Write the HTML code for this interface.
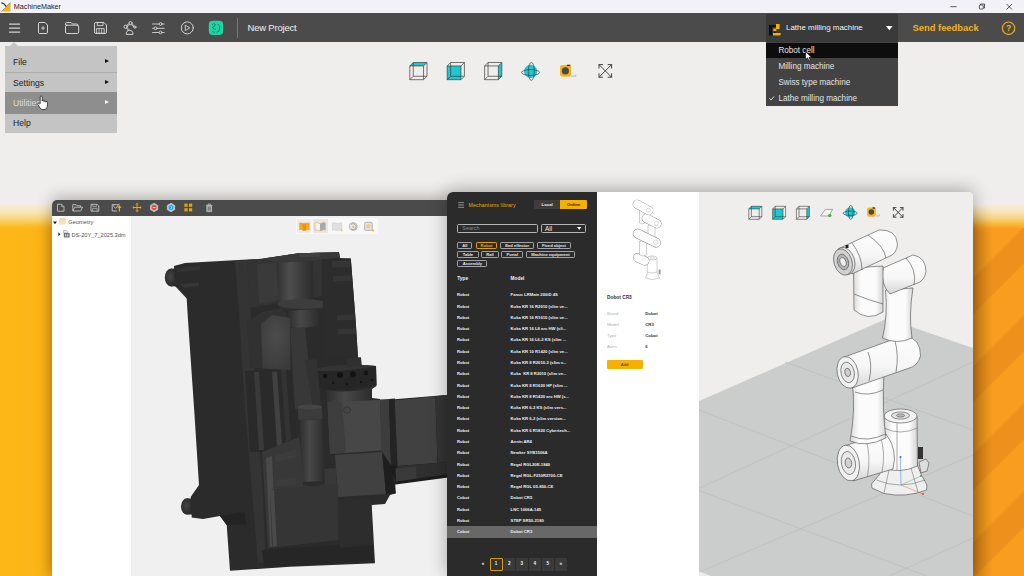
<!DOCTYPE html>
<html><head><meta charset="utf-8"><title>MachineMaker</title>
<style>
*{box-sizing:border-box;margin:0;padding:0}
html,body{width:1024px;height:576px;overflow:hidden;background:#efeeec;font-family:"Liberation Sans",sans-serif;}
.abs{position:absolute}
#titlebar{position:absolute;left:0;top:0;width:1024px;height:14px;background:#f3f1f8;}
#titlebar .t{position:absolute;left:13.8px;top:2px;font-size:7.2px;color:#222;line-height:10px}
#toolbar{position:absolute;left:0;top:14px;width:1024px;height:28.3px;background:#4b4b4b;}
#band{position:absolute;left:0;top:204px;width:1024px;height:372px;background:linear-gradient(90deg,#fdb716 0%,#fcb416 6%,#f89c1e 95%);}
#stripes{position:absolute;left:973px;top:228px;width:51px;height:348px;background:repeating-linear-gradient(135deg,#f89d1f 0,#f89d1f 34px,#ed911c 36.5px,#ed911c 60px,#f89d1f 62.2px)}
#lsh{position:absolute;left:40px;top:205px;width:12px;height:371px;background:linear-gradient(90deg,rgba(190,120,10,0),rgba(190,120,10,.22));-webkit-mask-image:linear-gradient(180deg,transparent 0,#000 30px);mask-image:linear-gradient(180deg,transparent 0,#000 30px)}
#rsh{position:absolute;left:973px;top:205px;width:19px;height:371px;background:linear-gradient(90deg,rgba(120,70,10,.4),rgba(120,70,10,.2) 40%,rgba(120,70,10,0));-webkit-mask-image:linear-gradient(180deg,transparent 0,#000 28px);mask-image:linear-gradient(180deg,transparent 0,#000 28px)}
#bandfade{position:absolute;left:0;top:204px;width:1024px;height:25px;background:linear-gradient(180deg,rgba(245,237,222,1) 0%,rgba(247,232,196,.96) 30%,rgba(249,222,150,.88) 55%,rgba(251,208,100,.68) 75%,rgba(252,196,60,.38) 90%,rgba(253,188,36,0) 100%);}
#menu{position:absolute;left:5px;top:45.5px;width:112px;height:87.5px;background:#c4c4c4;font-size:8.6px;color:#222}
#menu .it{position:absolute;left:0;width:112px;height:21px;line-height:21px;padding-left:8px}
#dd{position:absolute;left:766px;top:42px;width:131.5px;height:64px;background:#434343;font-size:8.15px;color:#e4e4e4}
#dd .it{position:absolute;left:0;width:132px;height:16px;line-height:16px;padding-left:12.4px;white-space:nowrap}
#lw{position:absolute;left:52px;top:199.5px;width:400px;height:377px;background:#f0f0f0;border-radius:5px 0 0 0;overflow:hidden;box-shadow:0 -2px 16px rgba(0,0,0,.3)}
#lw .tb{position:absolute;left:0;top:0;width:100%;height:16.6px;background:#4b4b4b}
#lw .tree{position:absolute;left:0;top:16.6px;width:79px;height:360px;background:#fff}
#rw{position:absolute;left:447px;top:191.5px;width:526px;height:385px;background:#efeeec;border-radius:6px 4px 0 0;overflow:hidden;box-shadow:0 -2px 18px rgba(0,0,0,.32)}
#rw .dark{position:absolute;left:0;top:0;width:150.7px;height:385px;background:#2b2b2b}
#rw .det{position:absolute;left:150px;top:0;width:102px;height:385px;background:#fff}

#titlebar svg{position:absolute}
.wc{position:absolute;top:0;color:#222;font-size:9px}
#toolbar svg{position:absolute}
#toolbar .np{position:absolute;left:247.5px;top:7px;font-size:9.5px;line-height:14px;color:#f0f0f0;letter-spacing:-.2px}
#toolbar .sep{position:absolute;left:237px;top:4px;width:1px;height:20px;background:#7a7a7a}
#sel{position:absolute;left:766px;top:0;width:131.5px;height:28.3px;background:#3a3a3a}
#sel .tx{position:absolute;left:20px;top:8px;font-size:7.95px;line-height:12px;color:#f2f2f2;white-space:nowrap}
#fb{position:absolute;left:912.5px;top:7px;font-size:9.4px;line-height:14px;font-weight:bold;color:#f2b31b;letter-spacing:0;white-space:nowrap}
#menu .it{white-space:nowrap}
#menu .arr{position:absolute;left:100px;width:0;height:0;border-left:4.8px solid #111;border-top:2.9px solid transparent;border-bottom:2.9px solid transparent}

#lw svg{position:absolute}
#lw .tr{position:absolute;font-size:5.7px;line-height:8px;color:#505050;white-space:nowrap}
#vicons{position:absolute;left:244px;top:18.5px;width:81.5px;height:15.5px;background:#f8f8f8}

#rw svg{position:absolute}
#rw .dark{color:#f0f0f0;font-size:4.2px;font-weight:bold}
#rw .dark div{position:absolute;white-space:nowrap}
.tag{height:7.2px;border:.7px solid #a4a4a4;border-radius:1.2px;font-size:4.1px;line-height:5.6px;text-align:center;color:#e8e8e8}
.row{left:0;width:150px;height:11.28px;line-height:11.28px}
.row span{position:absolute;left:10px}
.row span+span{left:63.6px}
.pg{top:366.7px;height:12.6px;background:#3a3a3a;line-height:12.6px;text-align:center;font-size:4.6px;border-radius:1px}
#rw .det{font-size:4.3px;color:#222}
#rw .det div{position:absolute;white-space:nowrap;line-height:6px}
#rw .det .k{left:10px;color:#b0b0b0}
#rw .det .v{left:48.2px;font-weight:bold;color:#333}
</style></head><body>
<div id="band"></div><div id="stripes"></div><div id="bandfade"></div><div id="lsh"></div><div id="rsh"></div>
<div id="titlebar">
<svg style="left:.9px;top:2.1px" width="10" height="10" viewBox="0 0 10 10"><rect x="0" y="0" width="9.6" height="9.6" fill="#fbfbfb"/><polygon points=".5,9.500 9.500,.600 9.500,9.500" fill="#f2b40f"/><path d="M.3,.6 L3.200,2 L5.300,4.600" stroke="#3a3a3a" stroke-width="1.2" fill="none"/><path d="M5.300,4.600 L8.600,1" stroke="#777" stroke-width=".7" fill="none"/><path d="M.4,9.600 L9.600,.500" stroke="#a07a10" stroke-width=".5"/><rect x="0" y="0" width="9.6" height="9.6" fill="none" stroke="#c9c9c9" stroke-width=".4"/></svg>
<div class="t">MachineMaker</div>
<svg style="left:948px;top:2px" width="70" height="10" viewBox="0 0 70 10"><g stroke="#333" stroke-width=".8" fill="none"><line x1="2.4" y1="4.7" x2="8.6" y2="4.7"/><rect x="31.3" y="3" width="4" height="4" rx="1"/><path d="M32.5,3 V2 H36.5 V6 H35.4"/><path d="M58.5,2 l5.5,5.5 M64,2 l-5.5,5.5"/></g></svg>
</div>
<div class="abs" style="left:0;top:13.3px;width:1024px;height:1px;background:#4b4b4b"></div><div class="abs" style="left:766px;top:13.5px;width:131.5px;height:1px;background:#3a3a3a"></div>
<div id="toolbar">
<svg style="left:0;top:0" width="240" height="28" viewBox="0 14 240 28"><g stroke="#d4d4d4" stroke-width="1" fill="none" stroke-linecap="round" stroke-linejoin="round">
<path d="M9.600,24.100 H19.600 M9.600,28.100 H19.600 M9.600,32.100 H19.600" stroke-width="1.400"/>
<path d="M39.5,22.5 H45 L47.5,25 V32.2 Q47.5,33.5 46.2,33.5 H39.7 Q38.5,33.5 38.5,32.2 V23.7 Q38.5,22.5 39.5,22.5 Z"/><path d="M43,26.6 V29.6 M41.5,28.1 H44.5" stroke-width=".9"/>
<path d="M65.5,25 V23.8 Q65.5,22.5 66.8,22.5 H71 L72.5,24 H76.6 Q78,24 78,25.3 V26"/><rect x="65.5" y="25.2" width="13.2" height="8.3" rx="1.4"/>
<path d="M94.5,23.8 Q94.5,22.5 95.8,22.5 H104 L106.5,25 V32.2 Q106.5,33.5 105.2,33.5 H95.8 Q94.5,33.5 94.5,32.2 Z"/><path d="M97.3,22.7 V25.6 H103 V22.7" stroke-width=".9"/><rect x="96.8" y="28.6" width="7.4" height="4.6" stroke-width=".9"/><path d="M99,29 V33 M101.6,29 V33" stroke-width=".7"/>
<path d="M126.200,34 Q126.200,30.300 129.600,30.300 Q133,30.300 133,34 Z"/><path d="M128.800,30.200 L125.600,26.700 L130.500,23.100 L134.600,26.800" stroke-width="1.700"/><path d="M128.800,30.200 L125.600,26.700 L130.500,23.100 L134.600,26.800" stroke="#4b4b4b" stroke-width=".5"/><circle cx="125.600" cy="26.700" r="1.600" fill="#4b4b4b"/><circle cx="130.500" cy="23.100" r="1.600" fill="#4b4b4b"/><circle cx="134.900" cy="27.100" r="1.100" fill="#4b4b4b"/>
<path d="M152.500,24 H164.200 M152.500,28.300 H164.200 M152.500,32.500 H164.200" stroke-width=".9"/><circle cx="160.600" cy="24" r="1.400" fill="#4b4b4b" stroke-width=".9"/><circle cx="155.600" cy="28.300" r="1.400" fill="#4b4b4b" stroke-width=".9"/><circle cx="160.600" cy="32.500" r="1.400" fill="#4b4b4b" stroke-width=".9"/>
<circle cx="187.3" cy="27.9" r="6"/><path d="M185.6,25.4 L189.8,27.9 L185.6,30.4 Z" stroke-width=".9"/>
</g>
<rect x="208.8" y="20.7" width="14.4" height="14.4" rx="4" fill="#1fd5a6"/>
<g stroke="#1a6b57" stroke-width=".8" fill="none"><path d="M212,25 q1.6,-2.4 3.4,-.6 q-.4,2.4 -3,3 q1,2.4 3.6,2 M217.6,24 l2.2,2.4 l-.6,4.4 l-2.6,1.6 M212.4,31.6 l2.4,.8"/></g>
</svg>
<div class="sep"></div><div class="np">New Project</div>
<div id="sel"><svg style="left:2.5px;top:9.5px" width="12" height="12" viewBox="0 0 12 12"><rect x="0" y="1" width="3.2" height="10.5" fill="#111"/><rect x="3.2" y="1" width="4" height="2" fill="#111"/><rect x="7" y="0" width="3.6" height="5" fill="#f5b000"/><rect x="4.4" y="4.6" width="3" height="2.6" fill="#f5b000"/><rect x="4" y="9" width="7.6" height="2.4" fill="#f5b000"/><rect x="5.2" y="7.2" width="1.4" height="1.8" fill="#111"/></svg>
<div class="tx">Lathe milling machine</div>
<svg style="left:119.5px;top:12px" width="7" height="5" viewBox="0 0 7 5"><polygon points="0,0 6.6,0 3.3,4.2" fill="#fff"/></svg></div>
<div id="fb">Send feedback</div>
<svg style="left:1001px;top:7px" width="15" height="15" viewBox="0 0 15 15"><circle cx="7.6" cy="7.2" r="6.2" fill="none" stroke="#f2b31b" stroke-width="1.1"/><text x="7.6" y="10.3" text-anchor="middle" font-family="Liberation Sans, sans-serif" font-weight="bold" font-size="8.6" fill="#f2b31b">?</text></svg>
</div>
<div class="abs" style="left:10px;top:42px;width:0;height:0;border-left:4.3px solid transparent;border-right:4.3px solid transparent;border-bottom:4px solid #c4c4c4"></div>
<svg class="abs" style="left:400px;top:56px" width="224" height="30" viewBox="400 56 224 30"><polygon points="409.80,65.94 423.56,65.94 427.00,62.50 413.24,62.50" fill="#1fc8cf"/><g stroke="#3c3c3c" stroke-width="0.70" fill="none"><polygon points="409.80,65.94 423.56,65.94 423.56,79.70 409.80,79.70"/><polygon points="413.24,62.50 427.00,62.50 427.00,76.26 413.24,76.26"/><line x1="409.80" y1="65.94" x2="413.24" y2="62.50"/><line x1="423.56" y1="65.94" x2="427.00" y2="62.50"/><line x1="423.56" y1="79.70" x2="427.00" y2="76.26"/><line x1="409.80" y1="79.70" x2="413.24" y2="76.26"/></g><polygon points="447.20,65.94 460.96,65.94 460.96,79.70 447.20,79.70" fill="#1fc8cf"/><g stroke="#3c3c3c" stroke-width="0.70" fill="none"><polygon points="447.20,65.94 460.96,65.94 460.96,79.70 447.20,79.70"/><polygon points="450.64,62.50 464.40,62.50 464.40,76.26 450.64,76.26"/><line x1="447.20" y1="65.94" x2="450.64" y2="62.50"/><line x1="460.96" y1="65.94" x2="464.40" y2="62.50"/><line x1="460.96" y1="79.70" x2="464.40" y2="76.26"/><line x1="447.20" y1="79.70" x2="450.64" y2="76.26"/></g><polygon points="498.36,65.94 501.80,62.50 501.80,76.26 498.36,79.70" fill="#1fc8cf"/><g stroke="#3c3c3c" stroke-width="0.70" fill="none"><polygon points="484.60,65.94 498.36,65.94 498.36,79.70 484.60,79.70"/><polygon points="488.04,62.50 501.80,62.50 501.80,76.26 488.04,76.26"/><line x1="484.60" y1="65.94" x2="488.04" y2="62.50"/><line x1="498.36" y1="65.94" x2="501.80" y2="62.50"/><line x1="498.36" y1="79.70" x2="501.80" y2="76.26"/><line x1="484.60" y1="79.70" x2="488.04" y2="76.26"/></g><circle cx="530.60" cy="71.40" r="6.62" fill="#1fc8cf"/><g stroke="#2f4a4c" stroke-width=".7" fill="none"><ellipse cx="530.60" cy="72.48" rx="9.00" ry="2.88"/><ellipse cx="531.32" cy="71.40" rx="3.02" ry="9.00"/></g><rect x="560.00" y="65.00" width="11.20" height="11.76" rx="2.46" fill="#f5b31c"/><circle cx="565.38" cy="70.88" r="3.58" fill="#4a4a4a"/><path d="M571.20,76.16 h4.70 v-1.40" stroke="#999" stroke-width=".6" fill="none"/><rect x="566.94" y="64.70" width="3.36" height="1.40" fill="#3a3a3a"/><g stroke="#444" stroke-width="1" fill="none" stroke-linecap="round"><path d="M599.00,64.60 L611.60,77.20 M611.60,64.60 L599.00,77.20"/><path d="M599.00,68.13 V64.60 H602.53 M611.60,68.13 V64.60 H608.07 M599.00,73.67 V77.20 H602.53 M611.60,73.67 V77.20 H608.07"/></g></svg>
<div id="menu">
<div class="it" style="top:6.2px">File</div><div class="arr" style="top:13.5px"></div>
<div class="abs" style="left:0;top:26.5px;width:112px;height:1px;background:#adadad"></div>
<div class="it" style="top:27px">Settings</div><div class="arr" style="top:34px"></div>
<div class="abs" style="left:0;top:46.5px;width:112px;height:21.5px;background:#8e8e8e"></div>
<div class="it" style="top:47.4px;color:#dcdcdc">Utilities</div><div class="arr" style="top:54.6px;border-left-color:#f4f4f4"></div>
<div class="it" style="top:67.8px">Help</div>
<svg class="abs" style="left:32px;top:49px" width="11" height="16" viewBox="0 0 11 16"><path d="M3.2,8.6 V2 q0,-1 1,-1 q1,0 1,1 V6 q0,-.8 .9,-.8 q.9,0 .9,.8 V6.6 q0,-.8 .9,-.8 q.9,0 .9,.8 V7.2 q0,-.7 .8,-.7 q.8,0 .8,.9 V11 q0,3.6 -3.4,3.6 H5.6 q-1.6,0 -2.6,-1.6 L.8,9.6 q-.5,-.9 .3,-1.3 q.8,-.3 1.4,.5 Z" fill="#fff" stroke="#222" stroke-width=".8"/></svg>
</div>
<div id="dd">
<div class="abs" style="left:0;top:1px;width:132px;height:15px;background:#0d0d0d"></div>
<div class="it" style="top:.5px">Robot cell</div>
<div class="it" style="top:16.5px">Milling machine</div>
<div class="it" style="top:32.5px">Swiss type machine</div>
<div class="it" style="top:48.5px">Lathe milling machine</div>
<svg class="abs" style="left:2.5px;top:54px" width="6" height="5" viewBox="0 0 6 5"><path d="M.5,2.4 L2,4 L5,.6" stroke="#eee" stroke-width=".9" fill="none"/></svg>
<svg class="abs" style="left:38.5px;top:8.5px" width="8" height="11" viewBox="0 0 8 11"><path d="M.6,.6 V8.6 L2.6,6.8 L4,10 L5.4,9.4 L4,6.4 H6.6 Z" fill="#fff" stroke="#111" stroke-width=".7"/></svg>
</div>
<div id="lw"><div class="tb">
<svg style="left:0;top:-.6px" width="400" height="17" viewBox="52 199 400 17"><g stroke="#cfcfcf" stroke-width=".8" fill="none" stroke-linejoin="round">
<path d="M57.5,204.2 H61.5 L64,206.7 V211.2 H57.5 Z"/><path d="M61.5,204.2 V206.7 H64" stroke-width=".6"/>
<path d="M72.8,211 V204.6 H76 L77,205.8 H80.6 V207"/><path d="M72.8,211 L74.8,207.2 H82.6 L80.6,211 Z"/>
<path d="M91,204.3 H97 L98.8,206 V211.2 H91 Z"/><path d="M92.8,204.4 V206.6 H96.4 V204.4 M92.6,211 V208.4 H97.2 V211" stroke-width=".6"/>
<path d="M112.2,204.6 H118.6 M112.2,204.6 V211 H117 M112.4,204.8 L115.6,208.4 L119.4,203.8" /></g>
<path d="M119.4,206 V211.6 M117.8,208 L119.4,206 L121,208" stroke="#f2a900" stroke-width="1.2" fill="none"/>
<g stroke="#f2a900" stroke-width="1" fill="none"><path d="M137,203.4 V211.6 M132.9,207.5 H141.1"/><path d="M135.8,204.6 L137,203.3 L138.2,204.6 M135.8,210.4 L137,211.7 L138.2,210.4 M134.1,206.3 L132.8,207.5 L134.1,208.7 M139.9,206.3 L141.2,207.5 L139.9,208.7" stroke-width=".8"/></g>
<path d="M154.1,203.3 L157.8,205.4 V209.6 L154.1,211.7 L150.4,209.6 V205.4 Z" fill="#b9b9b9" stroke="#ddd" stroke-width=".6"/><circle cx="154.1" cy="207.5" r="2.4" fill="#e8413c"/><rect x="152.8" y="207" width="2.6" height="1" fill="#fff"/>
<path d="M171,203.3 L174.7,205.4 V209.6 L171,211.7 L167.3,209.6 V205.4 Z" fill="#c9d3da" stroke="#ddd" stroke-width=".6"/><path d="M171,204.6 L173.4,206 V209 L171,210.4 L168.6,209 V206 Z" fill="#1aa7e8"/><path d="M170.4,206 L172,207.5 L170.4,209" stroke="#fff" stroke-width=".7" fill="none"/>
<g fill="#e9a400"><rect x="184.4" y="203.6" width="3.2" height="3.2"/><rect x="189" y="203.6" width="3.2" height="3.2"/><rect x="184.4" y="208.2" width="3.2" height="3.2"/><rect x="189" y="208.2" width="3.2" height="3.2"/></g>
<g stroke="#bdbdbd" stroke-width=".8" fill="none"><path d="M206,205.4 H212.4 M208,205.2 V204 H210.4 V205.2"/><path d="M206.8,205.6 V211.6 H211.6 V205.6 Z" fill="#a8a8a8"/><path d="M208.4,206.8 V210.4 M210,206.8 V210.4" stroke="#4b4b4b" stroke-width=".6"/></g>
</svg></div>
<div class="tree">
<svg style="left:1.4px;top:4.8px" width="5" height="4" viewBox="0 0 5 4"><polygon points="0,.4 4,.4 2,3.2" fill="#222"/></svg>
<svg style="left:7px;top:2.4px" width="8" height="7" viewBox="0 0 8 7"><rect x=".2" y=".4" width="6.6" height="6" rx=".8" fill="#f6e3b4"/><rect x=".2" y=".4" width="6.6" height="1.4" rx=".6" fill="#e2d1a8"/></svg>
<div class="tr" style="left:16.3px;top:2.4px">Geometry</div>
<svg style="left:5.8px;top:16.4px" width="3" height="5" viewBox="0 0 3 5"><polygon points=".3,.3 2.4,2.3 .3,4.3" fill="#222"/></svg>
<svg style="left:10.6px;top:14px" width="8" height="8" viewBox="0 0 8 8"><path d="M.6,.4 H3.6 L5,1.8 V3 H.6 Z" fill="#e9eef2" stroke="#889" stroke-width=".5"/><rect x=".8" y="3.2" width="5.8" height="4.2" fill="#555"/><rect x="1.8" y="4.2" width="1.6" height="2.4" fill="#ddd"/><rect x="4" y="4.2" width="1.6" height="2.4" fill="#ccc"/></svg>
<div class="tr" style="left:19.6px;top:14.6px;letter-spacing:-.05px">DS-20Y_7_2025.3dm</div>
</div>
<div id="vicons">
<div class="abs" style="left:.8px;top:.8px;width:14.2px;height:14px;background:#ebebeb"></div>
<div class="abs" style="left:17px;top:.8px;width:14.500px;height:14px;background:#e6e6e6"></div>
<svg style="left:0;top:0" width="82" height="16" viewBox="296 217.5 82 16">
<path d="M299.2,222.6 Q301,221.6 302.6,222.6 Q304.4,223.6 306,222.6 Q307.8,221.6 309.6,222.4 V229.6 Q307.8,228.8 306,229.8 Q304.4,230.8 302.6,229.8 Q301,228.8 299.2,229.8 Z" fill="#f7a823"/><path d="M302.6,222.6 Q304.4,223.6 306,222.6 V229.8 Q304.4,230.8 302.6,229.8 Z" fill="#e8940f"/>
<path d="M315,222.6 Q316.8,221.6 318.4,222.6 Q320.2,223.6 321.8,222.6 Q323.6,221.6 325.4,222.4 V229.6 Q323.6,228.8 321.8,229.8 Q320.2,230.8 318.4,229.8 Q316.8,228.8 315,229.8 Z" fill="#f4f4f4" stroke="#eeb04a" stroke-width=".7"/><path d="M320,223.200 Q321,223.200 321.800,222.600 Q323.600,221.600 325.400,222.400 V229.600 Q323.600,228.800 321.800,229.800 Q321,230.400 320,230.400 Z" fill="#a9a9a9"/>
<path d="M332.4,222.6 Q334.2,221.6 335.8,222.6 Q337.6,223.6 339.2,222.6 Q340.6,221.8 341.8,222.4 V229.6 Q340.6,228.8 339.2,229.8 Q337.6,230.8 335.8,229.8 Q334.2,228.8 332.4,229.8 Z" fill="#e0e0e0" stroke="#c8c8c8" stroke-width=".5"/><circle cx="341.6" cy="229.8" r=".9" fill="#efb73a"/>
<circle cx="353.2" cy="226" r="4" fill="#e9e9e9" stroke="#a9a9a9" stroke-width=".8"/><path d="M351,224 A3,3 0 1 1 351,228.4" stroke="#8a8a8a" stroke-width=".7" fill="none"/><circle cx="353.2" cy="226.4" r="1.2" fill="#f0c060"/>
<rect x="364.6" y="221.8" width="7.6" height="8" rx="1.2" fill="#e4e4e4" stroke="#a5a5a5" stroke-width=".8"/><circle cx="368.4" cy="225.8" r="2" fill="#f3c870"/><circle cx="373" cy="230" r="1" fill="#e9a400"/>
</svg></div>
</div>
<svg id="machine" class="abs" style="left:0;top:0" width="1024" height="576" viewBox="0 0 1024 576">
<defs>
<linearGradient id="cyl1" x1="0" x2="1" y1="0" y2="0"><stop offset="0" stop-color="#323232"/><stop offset=".35" stop-color="#4d4d4d"/><stop offset=".7" stop-color="#3a3a3a"/><stop offset="1" stop-color="#2c2c2c"/></linearGradient>
<linearGradient id="cyl2" x1="0" x2="1" y1="0" y2="0"><stop offset="0" stop-color="#2e2e2e"/><stop offset=".4" stop-color="#484848"/><stop offset="1" stop-color="#2c2c2c"/></linearGradient>
<radialGradient id="knob" cx=".45" cy=".45" r=".6"><stop offset="0" stop-color="#464646"/><stop offset="1" stop-color="#262626"/></radialGradient>
<radialGradient id="wall" cx=".5" cy=".4" r=".7"><stop offset="0" stop-color="#4c4c4c"/><stop offset="1" stop-color="#3a3a3a"/></radialGradient>
</defs>
<!-- knobs -->
<path d="M171,268.6 H179 V286.400 H171 Z" fill="#2e2e2e"/><ellipse cx="171" cy="277.500" rx="6.2" ry="8.9" fill="url(#knob)"/>
<path d="M187,498.500 H194 V514.500 H187 Z" fill="#2e2e2e"/><ellipse cx="187" cy="506.500" rx="6" ry="8.2" fill="url(#knob)"/>
<!-- arm going right -->
<polygon points="380,400.500 446,395 452,395 452,477 395.700,484.600 380,486" fill="#1c1c1c"/>
<!-- main silhouette -->
<polygon points="174,266 185,263 262.5,258.7 298.5,253.3 339,252.2 339.8,258 350.8,258.4 355.6,320 358,357.5 361,357.5 361.5,366 376,366 376.5,386 372,389 372,398 380,399 386,460 395,480 395.8,493.3 390,495 385,504 371.7,505 375,563.3 290,566.7 230,570.8 226.7,525 220,516 203,519 191.7,517.5 190.8,496.7 199,485 194.2,410 188,320 186.7,298.6 175,286" fill="#2b2b2b"/>
<!-- left face edge strip -->
<polygon points="235,261 247,260 252,330 257,410 262,480 266,562 258,563 251,480 245,410 239.5,320" fill="#343434"/>
<!-- top housing (lighter) -->
<polygon points="247,260 262.5,258.7 298.5,253.3 339,252.2 339.8,258 322,259 322,296 250,308" fill="#333"/>
<polygon points="257,264 276,262.5 279,300 259,304" fill="#3a3a3a"/>
<polygon points="262.500,258.600 298.500,253.300 339,252.200 339.600,257.600 313,260.500 277,262.300" fill="#393939"/><polygon points="298.500,253.300 320,252.700 320.400,256.500 300,257.500" fill="#414141"/>
<!-- big cylinder -->
<path d="M277,262.5 L313,261 L313.5,301 Q296,306 279,303 Z" fill="url(#cyl1)"/>
<ellipse cx="303" cy="306" rx="25.5" ry="5.5" fill="#2f2f2f"/>
<ellipse cx="303" cy="304" rx="25.5" ry="5" fill="#3d3d3d"/>
<path d="M288,311 L319,309 L319.5,325 Q304,330 289,327 Z" fill="url(#cyl2)"/>
<!-- right column -->
<polygon points="322,259 350.8,258.4 355.6,320 358,357.5 324,358" fill="#2c2c2c"/>
<g fill="#353535"><polygon points="332,261 350,260.5 350.3,267 332,267.5"/><polygon points="333,276 351.3,275.5 351.6,281 333,281.5"/><polygon points="337,315 354.5,314.5 354.8,320 337,320.5"/><polygon points="338,329 355.6,328.5 356,334 338,334.5"/></g>
<!-- inner lit wall -->
<polygon points="247,322 262,312 282,308 290,320 290,370 262,368 250,368" fill="#313131"/>
<polygon points="261,324 272,315 290,318 290.5,370 262.5,368.5" fill="url(#wall)"/>
<!-- column below cylinder -->
<polygon points="290,328 305,327 313,408 295,409" fill="#383838"/><polygon points="305,360 317,359 321,408 313,408" fill="#323232"/>
<!-- rails area -->
<polygon points="245,371 290,370 296,440 262,452 250,452" fill="#2a2a2a"/>
<polygon points="254,372 259,372 264,450 259,450" fill="#3a3a3a"/>
<polygon points="272,372 277,371.5 282,444 277,446" fill="#414141"/>
<polygon points="281,370 286,370 291,440 286,442" fill="#333"/>
<!-- turret ring -->
<path d="M317.5,368 Q346,362 376,366 L376.5,385 Q350,392 320,389 Z" fill="#262626"/>
<path d="M317.5,368 Q346,362 376,366 Q350,372 317.5,371 Z" fill="#343434"/>
<g fill="#121212"><circle cx="325" cy="376" r="2.2"/><circle cx="333" cy="383" r="1.2"/><circle cx="340" cy="375" r="3"/><circle cx="347" cy="384" r="1.2"/><circle cx="353" cy="374.5" r="3"/><circle cx="361" cy="382" r="1.2"/><circle cx="366" cy="373" r="2.2"/><circle cx="372" cy="380" r="1.2"/></g>
<polygon points="347,358 361,357.5 361.5,366 347.5,366.5" fill="#303030"/>
<!-- cylinder below turret -->
<path d="M326,390 Q348,394 371,388 L372,402 L327.5,403 Z" fill="url(#cyl2)"/>
<!-- block A -->
<polygon points="327.5,402 380,400 382,450.5 330,454" fill="#474747"/>
<polygon points="327.5,402 342,401.5 346,452.5 330,454" fill="#3e3e3e"/>
<circle cx="347" cy="410" r="3.3" fill="none" stroke="#2e2e2e" stroke-width=".7"/>
<!-- block B -->
<polygon points="380,399.5 389,399 391,465 382,465.5" fill="#3d3d3d"/>
<polygon points="389,399 395,398.5 397,466 391,465" fill="#242424"/>
<!-- block C -->
<polygon points="394.7,400.3 435.4,396.2 437.5,463 397.5,466" fill="#414141"/>
<polygon points="435.4,396.2 446,395 452,395 452,461 437.5,463" fill="#343434"/>
<polygon points="397.500,466 437.500,463 452,461 452,473.500 396,481.500" fill="#2f2f2f"/><polygon points="395.500,468.600 416,466.600 416.500,478.600 396,481.500" fill="#3a3a3a"/>
<!-- block D -->
<polygon points="335,455 382,452 386,494 338,497" fill="#414141"/>
<polygon points="382,452 391,465 395.700,493.500 386,494" fill="#1e1e1e"/>
<!-- vertical cylinder left of A -->
<!-- lower-left box -->
<polygon points="262,452 299,437 304,470 336,468 338,540 268,548" fill="#383838"/>
<polygon points="266,458 272,456 276,546 270,547" fill="#4a4a4a"/>
<polygon points="275,456 296,449 297,457 275.5,463" fill="#3c3c3c"/>
<polygon points="275,480 296,478 296.5,485 275.3,487" fill="#3c3c3c"/>
<polygon points="270,490 338,484 338.5,540 272,547" fill="#353535"/>
<polygon points="270,490 274,490 277,546 273,547" fill="#4a4a4a"/>
<!-- vertical cylinder -->
<polygon points="299.5,420 322,419 325,484 303,485" fill="url(#cyl2)"/>
<polygon points="297.5,407 322,406 322.5,419 298.5,420" fill="#3b3b3b"/><ellipse cx="310" cy="407" rx="12.3" ry="2.6" fill="#454545"/>
<path d="M303,485 Q314,488 325,484 L325,481 L303,482 Z" fill="#2c2c2c"/>
<!-- bottom frame -->
<polygon points="262,550 372,543 374,561 264,567" fill="#262626"/>
<polygon points="338,500 371,498 373,545 340,548" fill="#2d2d2d"/>
<!-- left small details -->
<polygon points="176,268 200,266 200,270 177,272" fill="#333"/>
<polygon points="180,284 199,282.5 199,286 184,288" fill="#353535"/>
<polygon points="220,516 245,512 246,524 226.7,525" fill="#232323"/>
</svg>

<div id="rw"><svg id="robot" class="abs" style="left:-447px;top:-191.5px" width="1024" height="576" viewBox="0 0 1024 576">
<defs>
<linearGradient id="rb" x1="0" x2="1" y1="0" y2="0"><stop offset="0" stop-color="#d9d9d9"/><stop offset=".25" stop-color="#fbfbfb"/><stop offset=".75" stop-color="#fbfbfb"/><stop offset="1" stop-color="#d4d4d4"/></linearGradient>
<linearGradient id="rbv" x1="0" x2="0" y1="0" y2="1"><stop offset="0" stop-color="#fdfdfd"/><stop offset=".6" stop-color="#f6f6f6"/><stop offset="1" stop-color="#d6d6d6"/></linearGradient>
</defs>
<!-- floor -->
<polygon points="697,402 887,318.5 973,348 973,576 697,576" fill="#cbcdcc"/>
<polygon points="697,570.500 711,576 697,576" fill="#ecebea"/>
<g stroke="#b9bbbb" stroke-width=".6" fill="none">
<line x1="785" y1="362" x2="973" y2="430"/>
<line x1="699" y1="410" x2="973" y2="516"/>
<line x1="699" y1="490.6" x2="927" y2="576"/>
<line x1="699" y1="488.3" x2="973" y2="362"/>
<line x1="699" y1="572.3" x2="973" y2="455"/>
<line x1="889" y1="576" x2="973" y2="538"/>
</g>
<g stroke="#4a4a4a" stroke-width=".6" stroke-linejoin="round">
<!-- base flange -->
<path d="M871.5,484 Q880,476 885,464 L917,464 Q921,476 927,485 L926.5,490 Q906,498 884,493.5 L872,488 Z" fill="#efefef"/>
<!-- connectors -->
<rect x="918" y="447" width="5" height="12" fill="#333" stroke="none"/>
<path d="M919,462 l7,-3 l3,4 l-2,8 l-6,2 z" fill="#ddd"/>
<!-- base column -->
<path d="M884,416 L884,468 Q900,474 917.5,466 L917,416 Z" fill="url(#rb)"/>
<ellipse cx="900.5" cy="416" rx="16.5" ry="7" fill="#f4f4f4"/>
<ellipse cx="900.5" cy="415.5" rx="9" ry="3.6" fill="#e2e2e2"/>
<ellipse cx="900.5" cy="415.5" rx="4" ry="1.6" fill="#bbb"/>
<path d="M884,428 Q900,436 917.400,428 M897,423 V470 M876.500,480 Q900,490 925,480 M889,470 L884,493 M911,468 L918,492" fill="none" stroke-width=".45"/>
<!-- shoulder horizontal -->
<path d="M845,445.5 L886,434 Q898,450 893,469 L853,481 Z" fill="url(#rbv)"/>
<ellipse cx="848.4" cy="463" rx="10.9" ry="18" fill="#f1f1f1" transform="rotate(-10 848.4 463)"/>
<ellipse cx="848.4" cy="463" rx="7" ry="11.6" fill="#e9e9e9" transform="rotate(-10 848.4 463)"/>
<ellipse cx="848.4" cy="463" rx="3.2" ry="5" fill="#d2d2d2" transform="rotate(-10 848.4 463)"/>
<path d="M866,439.600 Q871,456 867.500,476.600 M880,435.800 Q886,452 882,472" fill="none" stroke-width=".45"/>
<!-- forearm -->
<path d="M852,380 Q856,410 850,441 Q866,448 886,438 Q882,410 884,372 Z" fill="url(#rb)"/>
<path d="M851,436 Q867,443 885.5,434" fill="none"/>
<path d="M855,392 Q868,397 883,390" fill="none"/>
<!-- elbow horizontal -->
<path d="M843,357.5 L904,335.5 Q921,338 920.5,356 Q918,366 908,368.5 L852,388 Z" fill="url(#rbv)"/>
<ellipse cx="847.6" cy="372.4" rx="10.4" ry="16" fill="#f2f2f2" transform="rotate(-12 847.6 372.4)"/>
<ellipse cx="847.6" cy="372.4" rx="6.6" ry="10.4" fill="#e8e8e8" transform="rotate(-12 847.6 372.4)"/>
<ellipse cx="847.6" cy="372.4" rx="2.8" ry="4.2" fill="#cfcfcf" transform="rotate(-12 847.6 372.4)"/>
<path d="M868,352 Q873,365 869,381" fill="none"/>
<path d="M895,341 Q899,355 896,372" fill="none"/>
<!-- neck (upper arm) -->
<path d="M885.500,290 Q888,315 882.500,338 Q897,345 912,338 Q908.500,315 913,288 Z" fill="url(#rb)"/>
<!-- upper elbow cylinder 2 -->
<path d="M883,268 L913,255 Q926,257 926,272 Q924,282 915,284 L890,294 Q880,284 883,268 Z" fill="url(#rbv)"/>
<path d="M906,258 Q917,270 914,285" fill="none"/>
<!-- vertical wrist -->
<path d="M853.5,268 L854,310 Q868,322 883,312 L883,266 Z" fill="url(#rb)"/>
<path d="M854,294 Q868,300 883,304" fill="none"/>
<!-- top horizontal cylinder -->
<path d="M838,249 L879,230 Q896,229 897.5,244 Q897,254 888,257 L852,274 Z" fill="url(#rbv)"/>
<path d="M868,235 Q884,246 886,258" fill="none"/>
<path d="M852,243 Q862,256 862,270" fill="none"/>
<!-- flange -->
<ellipse cx="845" cy="261" rx="9.5" ry="14" fill="#e8e8e8" transform="rotate(-18 845 261)"/>
<ellipse cx="843" cy="262" rx="9" ry="13.5" fill="#d2d2d2" transform="rotate(-18 843 262)"/>
<ellipse cx="843" cy="262" rx="5.4" ry="8" fill="#b4b4b4" transform="rotate(-18 843 262)"/>
<ellipse cx="843" cy="262" rx="3" ry="4.6" fill="#eee" transform="rotate(-18 843 262)"/>
<rect x="845.5" y="245" width="3" height="3" fill="#222" stroke="none"/>
</g>
<!-- gizmo -->
<line x1="900.5" y1="457" x2="901" y2="485" stroke="#3b6fd8" stroke-width=".5"/>
<line x1="901" y1="485" x2="921" y2="476" stroke="#3a9a5a" stroke-width=".4"/>
<line x1="901" y1="485" x2="923" y2="494" stroke="#c8552a" stroke-width=".4"/>
<circle cx="900.5" cy="457" r="1" fill="#2e6be6"/><circle cx="921" cy="476" r=".9" fill="#2c9b56"/><circle cx="923" cy="494" r=".9" fill="#d04a20"/>
</svg>

<svg style="left:290px;top:9.5px" width="180" height="24" viewBox="737 201 180 24"><polygon points="748.80,208.90 759.20,208.90 761.80,206.30 751.40,206.30" fill="#1fc8cf"/><g stroke="#3c3c3c" stroke-width="0.60" fill="none"><polygon points="748.80,208.90 759.20,208.90 759.20,219.30 748.80,219.30"/><polygon points="751.40,206.30 761.80,206.30 761.80,216.70 751.40,216.70"/><line x1="748.80" y1="208.90" x2="751.40" y2="206.30"/><line x1="759.20" y1="208.90" x2="761.80" y2="206.30"/><line x1="759.20" y1="219.30" x2="761.80" y2="216.70"/><line x1="748.80" y1="219.30" x2="751.40" y2="216.70"/></g><polygon points="772.60,208.90 783.00,208.90 783.00,219.30 772.60,219.30" fill="#1fc8cf"/><g stroke="#3c3c3c" stroke-width="0.60" fill="none"><polygon points="772.60,208.90 783.00,208.90 783.00,219.30 772.60,219.30"/><polygon points="775.20,206.30 785.60,206.30 785.60,216.70 775.20,216.70"/><line x1="772.60" y1="208.90" x2="775.20" y2="206.30"/><line x1="783.00" y1="208.90" x2="785.60" y2="206.30"/><line x1="783.00" y1="219.30" x2="785.60" y2="216.70"/><line x1="772.60" y1="219.30" x2="775.20" y2="216.70"/></g><polygon points="806.80,208.90 809.40,206.30 809.40,216.70 806.80,219.30" fill="#1fc8cf"/><g stroke="#3c3c3c" stroke-width="0.60" fill="none"><polygon points="796.40,208.90 806.80,208.90 806.80,219.30 796.40,219.30"/><polygon points="799.00,206.30 809.40,206.30 809.40,216.70 799.00,216.70"/><line x1="796.40" y1="208.90" x2="799.00" y2="206.30"/><line x1="806.80" y1="208.90" x2="809.40" y2="206.30"/><line x1="806.80" y1="219.30" x2="809.40" y2="216.70"/><line x1="796.40" y1="219.30" x2="799.00" y2="216.70"/></g><polygon points="820.5,216 825.500,209.400 832.600,209.400 829,216" fill="#f4f4f4" stroke="#777" stroke-width=".6"/><circle cx="829.8" cy="215.6" r="1.600" fill="#4aa84a"/><circle cx="850.20" cy="212.40" r="5.15" fill="#1fc8cf"/><g stroke="#2f4a4c" stroke-width=".7" fill="none"><ellipse cx="850.20" cy="213.24" rx="7.00" ry="2.24"/><ellipse cx="850.76" cy="212.40" rx="2.35" ry="7.00"/></g><rect x="867.20" y="207.60" width="8.60" height="9.03" rx="1.89" fill="#f5b31c"/><circle cx="871.33" cy="212.11" r="2.75" fill="#4a4a4a"/><path d="M875.80,216.03 h3.61 v-1.40" stroke="#999" stroke-width=".6" fill="none"/><rect x="872.53" y="207.30" width="2.58" height="1.40" fill="#3a3a3a"/><g stroke="#444" stroke-width="1" fill="none" stroke-linecap="round"><path d="M893.40,207.60 L903.00,217.20 M903.00,207.60 L893.40,217.20"/><path d="M893.40,210.29 V207.60 H896.09 M903.00,210.29 V207.60 H900.31 M893.40,214.51 V217.20 H896.09 M903.00,214.51 V217.20 H900.31"/></g></svg>
<div class="dark">
<svg style="left:10.6px;top:10.3px" width="7" height="6" viewBox="0 0 7 6"><path d="M.2,.7 H6 M.2,3 H6 M.2,5.3 H6" stroke="#bbb" stroke-width=".7"/></svg>
<div style="left:21.6px;top:10.1px;font-size:5.25px;line-height:7px;color:#e9a800;font-weight:normal;letter-spacing:.1px">Mechanisms library</div>
<div style="left:87px;top:8.4px;width:26.4px;height:9px;background:#3c3c3c;border-radius:1px 0 0 1px;line-height:9px;text-align:center;font-size:4.3px">Local</div>
<div style="left:113.4px;top:8.4px;width:26.4px;height:9px;background:#f5b000;border-radius:0 1px 1px 0;line-height:9px;text-align:center;font-size:4.3px;color:#3a2a00">Online</div>
<div style="left:10.3px;top:32.1px;width:81.2px;height:9.7px;border:.8px solid #b5b5b5;border-radius:1.4px;font-size:5.4px;line-height:7.6px;padding-left:4px;color:#8a8a8a;font-weight:normal">Search</div>
<div style="left:94px;top:32.1px;width:45px;height:9.7px;border:.8px solid #b5b5b5;border-radius:1.4px;font-size:6.4px;line-height:7.6px;padding-left:3px;color:#eee;font-weight:normal">All</div>
<svg style="left:130.4px;top:35.3px" width="5" height="4" viewBox="0 0 5 4"><polygon points="0,0 4.4,0 2.2,2.8" fill="#fff"/></svg>
<div class="tag" style="left:10.3px;top:50.3px;width:15.2px;">All</div><div class="tag" style="left:28.5px;top:50.3px;width:21.9px;border-color:#e0a100;color:#e9a800">Robot</div><div class="tag" style="left:52.7px;top:50.3px;width:34.8px;">End effector</div><div class="tag" style="left:89.5px;top:50.3px;width:34.8px;">Fixed object</div><div class="tag" style="left:10.3px;top:59.5px;width:21.3px;">Table</div><div class="tag" style="left:34.0px;top:59.5px;width:18.0px;">Rail</div><div class="tag" style="left:54.2px;top:59.5px;width:22.1px;">Portal</div><div class="tag" style="left:78.6px;top:59.5px;width:49.7px;">Machine equipment</div><div class="tag" style="left:10.3px;top:68.4px;width:30.2px;">Assembly</div>
<div style="left:10.3px;top:83.5px;font-size:4.8px;line-height:7px">Type</div>
<div style="left:63.6px;top:83.5px;font-size:4.8px;line-height:7px">Model</div>
<div class="row" style="top:97.86px"><span>Robot</span><span>Fanuc LRMate 200iD 4S</span></div>
<div class="row" style="top:109.14px"><span>Robot</span><span>Kuka KR 16 R2010 (slim ve...</span></div>
<div class="row" style="top:120.42px"><span>Robot</span><span>Kuka KR 16 R1610 (slim ve...</span></div>
<div class="row" style="top:131.70px"><span>Robot</span><span>Kuka KR 16 L8 arc HW (sli...</span></div>
<div class="row" style="top:142.98px"><span>Robot</span><span>Kuka KR 16 L6-2 KS (slim ...</span></div>
<div class="row" style="top:154.26px"><span>Robot</span><span>Kuka KR 10 R1420 (slim ve...</span></div>
<div class="row" style="top:165.54px"><span>Robot</span><span>Kuka KR 8 R2010-2 (slim v...</span></div>
<div class="row" style="top:176.82px"><span>Robot</span><span>Kuka&nbsp; KR 8 R2010 (slim ve...</span></div>
<div class="row" style="top:188.10px"><span>Robot</span><span>Kuka KR 8 R1620 HP (slim ...</span></div>
<div class="row" style="top:199.38px"><span>Robot</span><span>Kuka KR 8 R1420 arc HW (s...</span></div>
<div class="row" style="top:210.66px"><span>Robot</span><span>Kuka KR 6-2 KS (slim vers...</span></div>
<div class="row" style="top:221.94px"><span>Robot</span><span>Kuka KR 6-2 (slim version...</span></div>
<div class="row" style="top:233.22px"><span>Robot</span><span>Kuka KR 6 R1820 Cybertech...</span></div>
<div class="row" style="top:244.50px"><span>Robot</span><span>Annin AR4</span></div>
<div class="row" style="top:255.78px"><span>Robot</span><span>Newker SYB1506A</span></div>
<div class="row" style="top:267.06px"><span>Robot</span><span>Regal RGL20E-1840</span></div>
<div class="row" style="top:278.34px"><span>Robot</span><span>Regal RGL-F210R2700-CE</span></div>
<div class="row" style="top:289.62px"><span>Robot</span><span>Regal RGL 05-850-CE</span></div>
<div class="row" style="top:300.90px"><span>Cobot</span><span>Dobot CR5</span></div>
<div class="row" style="top:312.18px"><span>Robot</span><span>LNC 1006A-145</span></div>
<div class="row" style="top:323.46px"><span>Robot</span><span>STEP SR50-2180</span></div>
<div class="row" style="top:334.74px;background:#686868"><span>Cobot</span><span>Dobot CR3</span></div>
<div class="pg" style="left:31.0px;width:10.0px;background:none">«</div><div class="pg" style="left:42.5px;width:13.2px;background:#333;border:1px solid #d9a000;line-height:10.6px">1</div><div class="pg" style="left:56.6px;width:11.4px;">2</div><div class="pg" style="left:69.2px;width:11.4px;">3</div><div class="pg" style="left:82.0px;width:11.8px;">4</div><div class="pg" style="left:95.0px;width:11.8px;">5</div><div class="pg" style="left:108.0px;width:11.5px;">»</div>
</div><div class="det">
<div style="left:10px;top:103.6px;font-weight:bold;font-size:4.8px;color:#333">Dobot CR3</div>
<div class="k" style="top:119.4px">Brand</div><div class="v" style="top:119.4px">Dobot</div>
<div class="k" style="top:130.3px">Model</div><div class="v" style="top:130.3px">CR3</div>
<div class="k" style="top:141.2px">Type</div><div class="v" style="top:141.2px">Cobot</div>
<div class="k" style="top:152.2px">Axes</div><div class="v" style="top:152.2px">6</div>
<div style="left:9.6px;top:168px;width:36.2px;height:9.2px;background:#f5b000;border-radius:1px;text-align:center;line-height:9.2px;font-weight:normal;color:#4a3500;font-size:4.3px">Add</div>
<svg style="left:28px;top:4px" width="44" height="90" viewBox="625 195 44 90"><path d="M645.6,277 L648.200,270 H656.400 L659.500,277 Q652.500,280 645.600,277 Z" fill="#fff" stroke="#858585" stroke-width=".4"/><rect x="658.6" y="268.6" width="2" height="4.600" fill="#999"/><path d="M647.3,257.0 V271.0 Q652.1,273.0 657.0,271.0 V257.0 Z" fill="#fff" stroke="#858585" stroke-width=".4"/><ellipse cx="652.2" cy="257" rx="4.85" ry="2" fill="#fff" stroke="#858585" stroke-width=".4"/><ellipse cx="652.2" cy="257" rx="2.4" ry="1" fill="none" stroke="#999" stroke-width=".35"/><line x1="637.7" y1="256.7" x2="644.6" y2="259.8" stroke="#858585" stroke-width="9.4" stroke-linecap="round"/><line x1="637.7" y1="256.7" x2="644.6" y2="259.8" stroke="#fff" stroke-width="8.6" stroke-linecap="round"/><path d="M639.5,240.0 V254.0 Q643.0,256.0 646.5,254.0 V240.0 Z" fill="#fff" stroke="#858585" stroke-width=".4"/><path d="M648.0,224.0 V240.0 Q651.5,242.0 655.0,240.0 V224.0 Z" fill="#fff" stroke="#858585" stroke-width=".4"/><line x1="637.7" y1="232.6" x2="656.1" y2="241.6" stroke="#858585" stroke-width="9.6" stroke-linecap="round"/><line x1="637.7" y1="232.6" x2="656.1" y2="241.6" stroke="#fff" stroke-width="8.8" stroke-linecap="round"/><circle cx="655.6" cy="241.200" r="2.200" fill="none" stroke="#999" stroke-width=".35"/><path d="M639.5,207.0 V222.0 Q642.2,224.0 645.0,222.0 V207.0 Z" fill="#fff" stroke="#858585" stroke-width=".4"/><line x1="646.3" y1="217.3" x2="656.9" y2="222.7" stroke="#858585" stroke-width="9.2" stroke-linecap="round"/><line x1="646.3" y1="217.3" x2="656.9" y2="222.7" stroke="#fff" stroke-width="8.4" stroke-linecap="round"/><circle cx="656.4" cy="222.400" r="2" fill="none" stroke="#999" stroke-width=".35"/><line x1="637.2" y1="203.2" x2="648.8" y2="209.6" stroke="#858585" stroke-width="9.0" stroke-linecap="round"/><line x1="637.2" y1="203.2" x2="648.8" y2="209.6" stroke="#fff" stroke-width="8.2" stroke-linecap="round"/><circle cx="648.4" cy="209.200" r="2" fill="none" stroke="#999" stroke-width=".35"/></svg>
</div></div>
</body></html>
